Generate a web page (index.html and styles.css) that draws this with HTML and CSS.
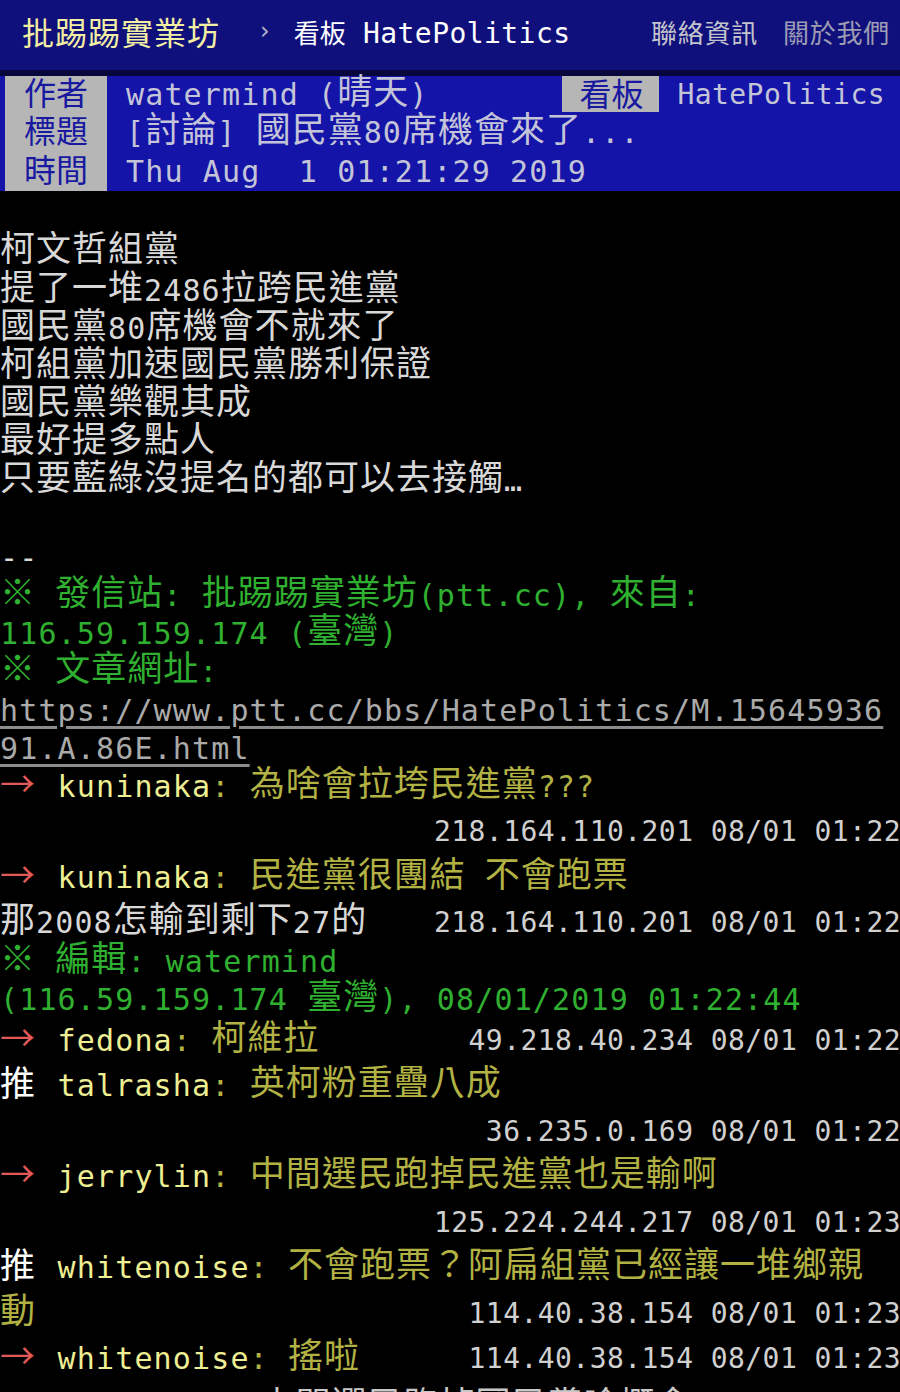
FILE: index.html
```html
<!DOCTYPE html>
<html lang="zh-Hant">
<head>
<meta charset="utf-8">
<title>[討論] 國民黨80席機會來了... - 看板 HatePolitics - 批踢踢實業坊</title>
<link rel="stylesheet" href="styles.css">
</head>
<body>
<div class="topbar">
  <span class="logo">批踢踢實業坊</span>
  <span class="sep">›</span>
  <span class="board"><span class="bl">看板</span><span class="bn"> HatePolitics</span></span>
  <nav class="links"><span class="l1">聯絡資訊</span><span class="l2">關於我們</span></nav>
</div>
<div class="meta">
  <div class="mrow">
    <span class="tag">作者</span>
    <span class="val">watermind (<span class="c">晴天</span>)</span>
    <span class="right"><span class="tag rtag">看板</span><span class="val small">HatePolitics</span></span>
  </div>
  <div class="mrow">
    <span class="tag">標題</span>
    <span class="val">[<span class="c">討論</span>] <span class="c">國民黨</span>80<span class="c">席機會來了</span>...</span>
  </div>
  <div class="mrow">
    <span class="tag">時間</span>
    <span class="val">Thu Aug  1 01:21:29 2019</span>
  </div>
</div>
<div class="main">
<div class="ln"></div>
<div class="ln"><span class="c">柯文哲組黨</span></div>
<div class="ln"><span class="c">提了一堆</span>2486<span class="c">拉跨民進黨</span></div>
<div class="ln"><span class="c">國民黨</span>80<span class="c">席機會不就來了</span></div>
<div class="ln"><span class="c">柯組黨加速國民黨勝利保證</span></div>
<div class="ln"><span class="c">國民黨樂觀其成</span></div>
<div class="ln"><span class="c">最好提多點人</span></div>
<div class="ln"><span class="c">只要藍綠沒提名的都可以去接觸</span>…</div>
<div class="ln"></div>
<div class="ln">--</div>
<div class="ln g"><span class="c">※</span> <span class="c">發信站</span>: <span class="c">批踢踢實業坊</span>(ptt.cc), <span class="c">來自</span>:</div>
<div class="ln g">116.59.159.174 (<span class="c">臺灣</span>)</div>
<div class="ln g"><span class="c">※</span> <span class="c">文章網址</span>:</div>
<div class="ln"><a class="url" href="#">https://www.ptt.cc/bbs/HatePolitics/M.15645936</a></div>
<div class="ln"><a class="url" href="#">91.A.86E.html</a></div>
<div class="pl"><span class="pt arrow">→</span><span class="uid">kuninaka</span><span class="pc">: <span class="c">為啥會拉垮民進黨</span>???</span></div>
<div class="pl"><span class="ip">218.164.110.201 08/01 01:22</span></div>
<div class="pl"><span class="pt arrow">→</span><span class="uid">kuninaka</span><span class="pc">: <span class="c">民進黨很團結</span> <span class="c">不會跑票</span></span></div>
<div class="ln"><span class="ip">218.164.110.201 08/01 01:22</span><span class="c">那</span>2008<span class="c">怎輸到剩下</span>27<span class="c">的</span></div>
<div class="ln g"><span class="c">※</span> <span class="c">編輯</span>: watermind</div>
<div class="ln g tall">(116.59.159.174 <span class="c">臺灣</span>), 08/01/2019 01:22:44</div>
<div class="pl"><span class="ip">49.218.40.234 08/01 01:22</span><span class="pt arrow">→</span><span class="uid">fedona</span><span class="pc">: <span class="c">柯維拉</span></span></div>
<div class="pl"><span class="pt tui">推</span><span class="uid">talrasha</span><span class="pc">: <span class="c">英柯粉重疊八成</span></span></div>
<div class="pl"><span class="ip">36.235.0.169 08/01 01:22</span></div>
<div class="pl"><span class="pt arrow">→</span><span class="uid">jerrylin</span><span class="pc">: <span class="c">中間選民跑掉民進黨也是輸啊</span></span></div>
<div class="pl"><span class="ip">125.224.244.217 08/01 01:23</span></div>
<div class="pl"><span class="pt tui">推</span><span class="uid">whitenoise</span><span class="pc">: <span class="c">不會跑票？阿扁組黨已經讓一堆鄉親</span></span></div>
<div class="pl"><span class="ip">114.40.38.154 08/01 01:23</span><span class="pc"><span class="c">動</span></span></div>
<div class="pl"><span class="ip">114.40.38.154 08/01 01:23</span><span class="pt arrow">→</span><span class="uid">whitenoise</span><span class="pc">: <span class="c">搖啦</span></span></div>
<div class="pl last"><span class="pad">               </span><span class="c">中間選民跑掉國民黨啥概念</span></div>
</div>
</body>
</html>
```

FILE: styles.css
```css
* {
  box-sizing: border-box;
}

html,
body {
  margin: 0;
  padding: 0;
  background: #000;
}

body {
  width: 900px;
  height: 1392px;
  overflow: hidden;
  font-family: "DejaVu Sans Mono", "Noto Sans CJK TC", monospace;
  font-size: 30px;
  letter-spacing: 1.14px;
  color: #d8d8d8;
}

.c {
  font-family: "Noto Sans CJK TC", "Noto Sans CJK JP", sans-serif;
  font-size: 35px;
  letter-spacing: 1px;
  line-height: 20px;
  vertical-align: 1px;
}

/* top bar */
.topbar {
  height: 76px;
  background: #10107c;
  border-bottom: 6px solid #07073e;
  display: flex;
  align-items: center;
  padding: 0 10px 8px 22px;
  letter-spacing: 0;
}

.logo {
  font-family: "Noto Sans CJK TC", sans-serif;
  font-size: 32px;
  letter-spacing: 1px;
  color: #f3efa2;
}

.sep {
  margin-left: 40px;
  font-family: "DejaVu Sans", sans-serif;
  font-size: 24px;
  color: #b4b4c8;
}

.board {
  margin-left: 24px;
  color: #fff;
  white-space: pre;
}

.board .bl {
  font-family: "Noto Sans CJK TC", sans-serif;
  font-size: 26px;
}

.board .bn {
  font-family: "DejaVu Sans Mono", monospace;
  font-size: 28px;
  letter-spacing: 0.44px;
}

.links {
  margin-left: auto;
  display: flex;
  gap: 25px;
  font-family: "Noto Sans CJK TC", sans-serif;
  font-size: 26px;
  letter-spacing: 0.75px;
}

.l1 {
  color: #c4c4cc;
}

.l2 {
  color: #9c9cb4;
}

/* meta */
.meta {
  background: #1414a8;
  padding-left: 5px;
}

.mrow {
  display: flex;
  height: 38.4px;
  line-height: 38.4px;
  white-space: pre;
}

.tag {
  display: block;
  height: 38.4px;
  line-height: 30px;
  background: #b6b6b6;
  color: #1818a0;
  font-family: "Noto Sans CJK TC", sans-serif;
  font-size: 32px;
  letter-spacing: 0;
  padding: 0 19px;
}

.rtag {
  height: 36px;
  line-height: 32px;
  padding: 0 16px 0 17px;
}

.val {
  margin-left: 19px;
  color: #c4c4d8;
}

.right {
  margin-left: auto;
  display: flex;
  padding-right: 15px;
}

.val.small {
  font-size: 28px;
  letter-spacing: 0.44px;
  margin-left: 18px;
}

/* article body */
.main {
  padding-top: 4px;
}

.ln {
  height: 38.2px;
  line-height: 38.2px;
  white-space: pre;
}

.ln.tall {
  height: 41px;
}

.pl {
  height: 45.5px;
  line-height: 38.2px;
  padding-bottom: 7.3px;
  white-space: pre;
}

.pl.last {
  padding-top: 3px;
  color: #c8c8c8;
}

.g {
  color: #30b030;
}

.url {
  color: #aaaaaa;
  text-decoration: underline;
  text-decoration-color: #8c8c8c;
  text-decoration-thickness: 3px;
  text-underline-offset: 5px;
}

.pt {
  display: inline-block;
  width: 57.6px;
  font-family: "Noto Sans CJK TC", sans-serif;
  font-size: 35px;
  line-height: 20px;
  letter-spacing: 0;
}

.arrow {
  color: #e05a5a;
}

.tui {
  color: #ffffff;
}

.uid {
  color: #eeee92;
}

.pc {
  color: #b2b244;
}

.ip {
  float: right;
  font-size: 28px;
  letter-spacing: 0.44px;
  color: #d0d0d0;
  margin-right: -1px;
}

.pad {
  font-size: 28px;
  letter-spacing: 0.44px;
}
```
